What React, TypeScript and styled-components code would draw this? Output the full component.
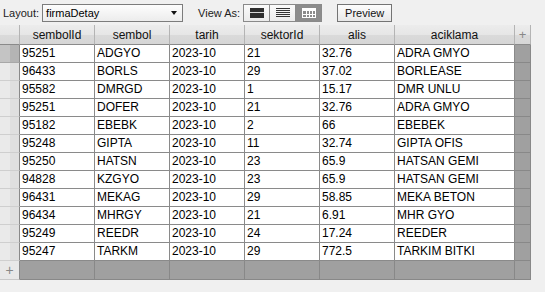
import styled, { createGlobalStyle } from "styled-components";

const GlobalStyle = createGlobalStyle`
  html, body {
    margin: 0;
    padding: 0;
    background: #f0f0f0;
  }
`;

const Page = styled.div`
  width: 545px;
  height: 292px;
  overflow: hidden;
  background: #f0f0f0;
  font-family: "Liberation Sans", Arial, sans-serif;
  font-size: 12px;
  color: #000;
`;

const Toolbar = styled.div`
  height: 25px;
  display: flex;
  align-items: center;
  padding-left: 3px;
  box-sizing: border-box;
  font-size: 11px;
`;

const Label = styled.span`
  color: #222;
  margin-right: 3px;
`;

const Select = styled.div`
  width: 141px;
  height: 18px;
  box-sizing: border-box;
  border: 1px solid #7c7c7c;
  background: linear-gradient(#fdfdfd, #ececec);
  display: flex;
  align-items: center;
  justify-content: space-between;
  padding: 0 5px 0 3px;
  margin-right: 15px;
`;

const Arrow = styled.span`
  width: 0;
  height: 0;
  border-left: 3.5px solid transparent;
  border-right: 3.5px solid transparent;
  border-top: 4px solid #111;
  margin-top: 1px;
`;

const Segment = styled.div`
  display: flex;
  height: 18px;
  border: 1px solid #8a8a8a;
  box-sizing: border-box;
  margin-right: 15px;
`;

const SegButton = styled.div<{ $active?: boolean }>`
  width: 25px;
  display: flex;
  align-items: center;
  justify-content: center;
  background: ${(p) => (p.$active ? "#8c8c8c" : "linear-gradient(#fbfbfb, #ebebeb)")};
  & + & {
    border-left: 1px solid #8a8a8a;
  }
`;

const Button = styled.div`
  height: 18px;
  box-sizing: border-box;
  padding: 0 7px;
  border: 1px solid #747474;
  background: linear-gradient(#fdfdfd, #e8e8e8);
  display: flex;
  align-items: center;
  color: #111;
`;

const Grid = styled.div`
  display: grid;
  grid-template-columns: 20px repeat(5, 75px) 120px 16px;
  width: 531px;
`;

const HeadCell = styled.div<{ $muted?: boolean }>`
  height: 20px;
  box-sizing: border-box;
  border-right: 1px solid #b4b4b4;
  border-bottom: 1px solid #8a8a8a;
  background: linear-gradient(#ececec 0%, #e6e6e6 50%, #dadada 51%, #d6d6d6 100%);
  display: flex;
  align-items: center;
  justify-content: center;
  color: ${(p) => (p.$muted ? "#888" : "#111")};
  font-size: ${(p) => (p.$muted ? "13px" : "12px")};
`;

const RowHead = styled.div<{ $selected?: boolean }>`
  height: 18px;
  box-sizing: border-box;
  border-right: 1px solid #8a8a8a;
  border-bottom: 1px solid ${(p) => (p.$selected ? "#a8a8a8" : "#cfcfcf")};
  background: ${(p) =>
    p.$selected
      ? "linear-gradient(90deg, #c4c4c4 0%, #c4c4c4 50%, #b4b4b4 51%, #b4b4b4 100%)"
      : "linear-gradient(90deg, #eaeaea 0%, #eaeaea 50%, #e0e0e0 51%, #e0e0e0 100%)"};
`;

const Cell = styled.div`
  height: 18px;
  box-sizing: border-box;
  border-right: 1px solid #8a8a8a;
  border-bottom: 1px solid #8a8a8a;
  background: #fff;
  padding-left: 2px;
  line-height: 17px;
  white-space: nowrap;
  overflow: hidden;
`;

const Filler = styled.div<{ $tall?: boolean }>`
  height: ${(p) => (p.$tall ? "19px" : "18px")};
  box-sizing: border-box;
  border-right: 1px solid #888;
  border-bottom: 1px solid #888;
  background: #a0a0a0;
`;

const AddHead = styled.div`
  height: 19px;
  box-sizing: border-box;
  border-right: 1px solid #8a8a8a;
  border-bottom: 1px solid #c8c8c8;
  background: #e8e8e8;
  color: #888;
  font-size: 14px;
  display: flex;
  align-items: center;
  justify-content: center;
`;

const columns = ["sembolId", "sembol", "tarih", "sektorId", "alis", "aciklama"];

const rows: string[][] = [
  ["95251", "ADGYO", "2023-10", "21", "32.76", "ADRA GMYO"],
  ["96433", "BORLS", "2023-10", "29", "37.02", "BORLEASE"],
  ["95582", "DMRGD", "2023-10", "1", "15.17", "DMR UNLU"],
  ["95251", "DOFER", "2023-10", "21", "32.76", "ADRA GMYO"],
  ["95182", "EBEBK", "2023-10", "2", "66", "EBEBEK"],
  ["95248", "GIPTA", "2023-10", "11", "32.74", "GIPTA OFIS"],
  ["95250", "HATSN", "2023-10", "23", "65.9", "HATSAN GEMI"],
  ["94828", "KZGYO", "2023-10", "23", "65.9", "HATSAN GEMI"],
  ["96431", "MEKAG", "2023-10", "29", "58.85", "MEKA BETON"],
  ["96434", "MHRGY", "2023-10", "21", "6.91", "MHR GYO"],
  ["95249", "REEDR", "2023-10", "24", "17.24", "REEDER"],
  ["95247", "TARKM", "2023-10", "29", "772.5", "TARKIM BITKI"],
];

const FormIcon = () => (
  <svg width="14" height="10" viewBox="0 0 14 10" shapeRendering="crispEdges">
    <rect x="0" y="0" width="14" height="10" fill="#2e2e2e" />
    <rect x="0" y="4" width="14" height="1" fill="#d8d8d8" />
  </svg>
);

const ListIcon = () => (
  <svg width="14" height="9" viewBox="0 0 14 9" shapeRendering="crispEdges">
    {[0, 2, 4, 6, 8].map((y) => (
      <rect key={y} x="0" y={y} width="14" height="1" fill="#333" />
    ))}
  </svg>
);

const TableIcon = () => (
  <svg width="14" height="10" viewBox="0 0 14 10" shapeRendering="crispEdges">
    <rect x="0" y="0" width="14" height="3" fill="#fff" />
    <rect x="0" y="3" width="1" height="7" fill="#fff" />
    <rect x="13" y="3" width="1" height="7" fill="#fff" />
    <rect x="0" y="9" width="14" height="1" fill="#fff" />
    <rect x="0" y="6" width="14" height="1" fill="#fff" />
    <rect x="4" y="3" width="1" height="7" fill="#fff" />
    <rect x="7" y="3" width="1" height="7" fill="#fff" />
    <rect x="10" y="3" width="1" height="7" fill="#fff" />
  </svg>
);

export default function App() {
  return (
    <Page>
      <GlobalStyle />
      <Toolbar>
        <Label>Layout:</Label>
        <Select>
          <span>firmaDetay</span>
          <Arrow />
        </Select>
        <Label>View As:</Label>
        <Segment>
          <SegButton>
            <FormIcon />
          </SegButton>
          <SegButton>
            <ListIcon />
          </SegButton>
          <SegButton $active>
            <TableIcon />
          </SegButton>
        </Segment>
        <Button>Preview</Button>
      </Toolbar>
      <Grid>
        <HeadCell />
        {columns.map((c) => (
          <HeadCell key={c}>{c}</HeadCell>
        ))}
        <HeadCell $muted>+</HeadCell>
        {rows.map((r, i) => (
          <>
            <RowHead key={`h${i}`} $selected={i === 0} />
            {r.map((v, j) => (
              <Cell key={`${i}-${j}`}>{v}</Cell>
            ))}
            <Filler key={`f${i}`} />
          </>
        ))}
        <AddHead>+</AddHead>
        {columns.map((c) => (
          <Filler key={`a${c}`} $tall />
        ))}
        <Filler $tall />
      </Grid>
    </Page>
  );
}
